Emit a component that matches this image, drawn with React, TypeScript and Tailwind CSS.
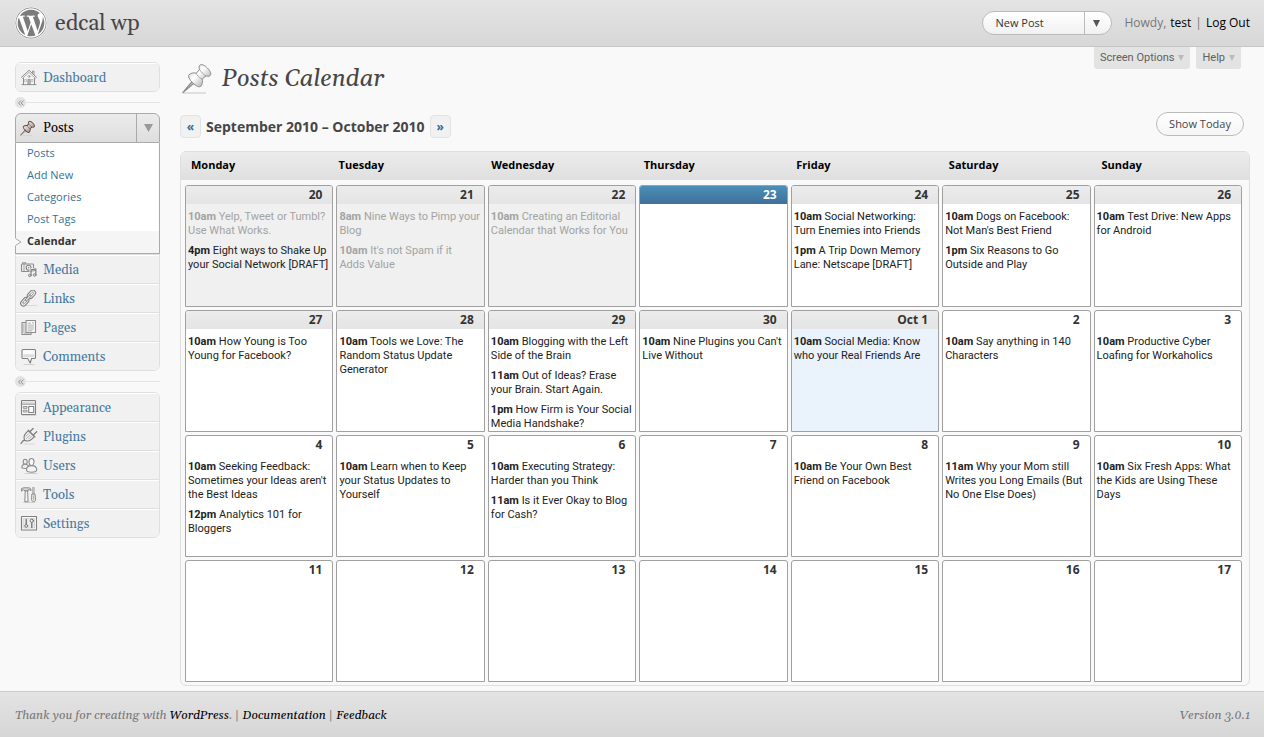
import React from "react";
import { FaWordpress } from "react-icons/fa";

type Post = { time: string; title: string; faded?: boolean };
type Tone = "past" | "today" | "near" | "first" | "plain";
type Day = { label: string; tone: Tone; posts?: Post[] };

const p = (time: string, title: string, faded = false): Post => ({ time, title, faded });

const weekdays = ["Monday", "Tuesday", "Wednesday", "Thursday", "Friday", "Saturday", "Sunday"];

const weeks: Day[][] = [
  [
    { label: "20", tone: "past", posts: [p("10am", "Yelp, Tweet or Tumbl? Use What Works.", true), p("4pm", "Eight ways to Shake Up your Social Network [DRAFT]")] },
    { label: "21", tone: "past", posts: [p("8am", "Nine Ways to Pimp your Blog", true), p("10am", "It's not Spam if it Adds\u00a0Value", true)] },
    { label: "22", tone: "past", posts: [p("10am", "Creating an Editorial Calendar that Works for You", true)] },
    { label: "23", tone: "today" },
    { label: "24", tone: "near", posts: [p("10am", "Social Networking: Turn Enemies into Friends"), p("1pm", "A Trip Down Memory Lane: Netscape [DRAFT]")] },
    { label: "25", tone: "near", posts: [p("10am", "Dogs on Facebook: Not Man's Best Friend"), p("1pm", "Six Reasons to Go Outside and Play")] },
    { label: "26", tone: "near", posts: [p("10am", "Test Drive: New Apps for Android")] },
  ],
  [
    { label: "27", tone: "near", posts: [p("10am", "How Young is Too Young for Facebook?")] },
    { label: "28", tone: "near", posts: [p("10am", "Tools we Love: The Random Status Update Generator")] },
    { label: "29", tone: "near", posts: [p("10am", "Blogging with the Left Side of the Brain"), p("11am", "Out of Ideas? Erase your\u00a0Brain. Start Again."), p("1pm", "How Firm is Your Social Media Handshake?")] },
    { label: "30", tone: "near", posts: [p("10am", "Nine Plugins you Can't Live Without")] },
    { label: "Oct 1", tone: "first", posts: [p("10am", "Social Media: Know who\u00a0your Real Friends Are")] },
    { label: "2", tone: "plain", posts: [p("10am", "Say anything in 140 Characters")] },
    { label: "3", tone: "plain", posts: [p("10am", "Productive Cyber Loafing for Workaholics")] },
  ],
  [
    { label: "4", tone: "plain", posts: [p("10am", "Seeking Feedback: Sometimes your Ideas aren't the Best Ideas"), p("12pm", "Analytics 101 for Bloggers")] },
    { label: "5", tone: "plain", posts: [p("10am", "Learn when to Keep your Status Updates to Yourself")] },
    { label: "6", tone: "plain", posts: [p("10am", "Executing Strategy: Harder than you Think"), p("11am", "Is it Ever Okay to Blog for Cash?")] },
    { label: "7", tone: "plain" },
    { label: "8", tone: "plain", posts: [p("10am", "Be Your Own Best Friend on Facebook")] },
    { label: "9", tone: "plain", posts: [p("11am", "Why your Mom still Writes you Long Emails (But No One Else Does)")] },
    { label: "10", tone: "plain", posts: [p("10am", "Six Fresh Apps: What the Kids are Using These Days")] },
  ],
  ["11", "12", "13", "14", "15", "16", "17"].map((label): Day => ({ label, tone: "plain" })),
];

const cellTone: Record<Tone, string> = {
  past: "bg-[#f0f0f0]",
  today: "bg-white",
  near: "bg-white",
  first: "bg-[#eaf2fb]",
  plain: "bg-white",
};

const labelTone: Record<Tone, string> = {
  past: "bg-linear-to-b from-[#ececec] to-[#e4e4e4] text-[#333]",
  today: "bg-linear-to-b from-[#4b8fb9] to-[#3f7099] text-white",
  near: "bg-linear-to-b from-[#ececec] to-[#e4e4e4] text-[#333]",
  first: "bg-linear-to-b from-[#ececec] to-[#e4e4e4] text-[#333]",
  plain: "text-[#333]",
};

function Icon({ children }: { children: React.ReactNode }) {
  return (
    <svg viewBox="0 0 18 18" className="size-[18px] shrink-0" fill="none" stroke="#8c8c8c" strokeWidth="1.1" strokeLinejoin="round" strokeLinecap="round" aria-hidden="true">
      {children}
    </svg>
  );
}

const icons = {
  house: (
    <Icon>
      <path d="M3.4 8.600 9 3.200l5.600 5.400V15.500H3.400z" fill="#f4f4f4" stroke="none" />
      <path d="M3.500 9v6.500M14.500 9v6.500" strokeWidth="1" />
      <path d="M1.500 8.300 9 1.300l7.500 7" strokeWidth="1" />
      <path d="M2.600 9.300 9 3.400l6.400 5.900" stroke="#a8a8a8" strokeWidth="0.9" />
      <path d="M12.500 4V2h1.500v3.400" fill="#ddd" strokeWidth="0.8" />
      <path d="M5 10.500h1.500v2H5zM11.500 10.500H13v2h-1.500z" fill="#fff" stroke="#aaa" strokeWidth="0.7" />
      <path d="M7.900 15.400v-5h2.300v5" fill="#b9b9b9" strokeWidth="0.8" />
      <circle cx="9" cy="7.400" r="1" fill="#fff" strokeWidth="0.7" />
      <path d="M2 15.600h14" stroke="#888" strokeWidth="0.9" />
    </Icon>
  ),
  media: (
    <Icon>
      <path d="M2.600 3V1.700h3V3" strokeWidth="0.9" />
      <rect x="1.500" y="3" width="12" height="7.500" rx="0.800" fill="#f1f1f1" />
      <path d="M4 3.200v7.200" strokeWidth="0.8" />
      <circle cx="8.600" cy="6.700" r="2.400" fill="#fff" stroke="#808080" />
      <circle cx="8.600" cy="6.700" r="0.900" fill="#999" stroke="none" />
      <path d="M11 14V8.900l4.800-1v5.800" fill="#f1f1f1" stroke="#f1f1f1" strokeWidth="3" />
      <path d="M11 14V8.900l4.800-1v5.800" stroke="#808080" strokeWidth="1.200" />
      <path d="M11 10.300l4.800-1" stroke="#808080" strokeWidth="0.8" />
      <ellipse cx="9.800" cy="14.400" rx="1.400" ry="1.200" fill="#ddd" stroke="#808080" strokeWidth="0.9" />
      <ellipse cx="14.600" cy="14" rx="1.400" ry="1.200" fill="#ddd" stroke="#808080" strokeWidth="0.9" />
    </Icon>
  ),
  links: (
    <Icon>
      <path d="M3 15.500h13.500" stroke="#d8d8d8" />
      <g transform="rotate(-48 8 8.200)">
        <rect x="-1.600" y="5.400" width="9.600" height="5.600" rx="2.800" fill="#ebebeb" stroke="#7c7c7c" strokeWidth="1" />
        <rect x="0.700" y="7.300" width="5" height="1.800" rx="0.900" fill="#fff" stroke="#7c7c7c" strokeWidth="0.700" />
        <rect x="8.400" y="5.400" width="9.600" height="5.600" rx="2.800" fill="#ebebeb" stroke="#7c7c7c" strokeWidth="1" />
        <rect x="10.700" y="7.300" width="5" height="1.800" rx="0.900" fill="#fff" stroke="#7c7c7c" strokeWidth="0.700" />
        <rect x="4.600" y="7.200" width="7.200" height="2" rx="1" fill="#e2e2e2" stroke="#7c7c7c" strokeWidth="0.800" />
      </g>
    </Icon>
  ),
  pages: (
    <Icon>
      <path d="M6 3.500H2v12h9v-2" fill="#e4e4e4" />
      <path d="M3.800 5.500v7.500M4.500 14.200h4" stroke="#b0b0b0" strokeWidth="0.8" />
      <rect x="6" y="1.500" width="9.500" height="12" fill="#fafafa" />
      <path d="M8 4.200h2.600M8 6.200h5.500M8 8.100h5.500M8 10h5.500M8 11.800h4" stroke="#a8a8a8" strokeWidth="0.9" />
      <path d="M12 3h2v1.500h-2z" fill="#c4c4c4" stroke="none" />
    </Icon>
  ),
  comments: (
    <Icon>
      <path d="M4 16.500h10" stroke="#d0d0d0" />
      <path d="M3 1.500h11.500a1 1 0 0 1 1 1V9.500a1 1 0 0 1-1 1h-3L10.300 15 7.600 10.500H3a1 1 0 0 1-1-1V2.500a1 1 0 0 1 1-1z" fill="#fafafa" stroke="#808080" />
      <path d="M3.300 6.200h11v3h-11z" fill="#dcdcdc" stroke="none" />
    </Icon>
  ),
  appearance: (
    <Icon>
      <path d="M2 16.300h14" stroke="#d0d0d0" />
      <rect x="1.500" y="1.500" width="14" height="14" rx="0.800" fill="#fafafa" stroke="#808080" />
      <path d="M2 2.500h13v2.400H2z" fill="#dadada" stroke="none" />
      <path d="M2 5.300h13" stroke="#909090" strokeWidth="0.9" />
      <path d="M3.700 7.500h3.300v1.800H3.700zM3.700 11.200h3.300V13H3.700z" fill="#e8e8e8" strokeWidth="0.9" />
      <path d="M8.700 7.500h5v6h-5z" fill="#fff" stroke="#808080" />
    </Icon>
  ),
  plugins: (
    <Icon>
      <path d="M4 16h10.500" stroke="#d8d8d8" />
      <path d="M4.800 12.200c-2.600-.4-2.800 3-3.800 3.200" stroke="#888" strokeWidth="1.500" />
      <g transform="rotate(45 9 8)">
        <path d="M4.800 4.600h8.400v3.600c0 2.800-2 5-4.200 6-2.200-1-4.200-3.200-4.200-6z" fill="#efefef" stroke="#7c7c7c" />
        <path d="M4.200 4.400h9.600" stroke="#7c7c7c" strokeWidth="1.200" />
        <path d="M6.600 4V-.4M11.400 4V-.4" stroke="#7c7c7c" strokeWidth="1.300" />
        <path d="M7 6.800v3.400M9 6.800v4.800M11 6.800v3.400" stroke="#aaa" strokeWidth="0.8" />
      </g>
    </Icon>
  ),
  users: (
    <Icon>
      <path d="M5 16.500h12" stroke="#d0d0d0" />
      <ellipse cx="5.200" cy="4.800" rx="2" ry="2.500" fill="#ededed" />
      <path d="M1.800 10.300c0-2 1.300-3.100 3.400-3.100s3.400 1.100 3.400 3.100c0 1.500-6.800 1.500-6.800 0z" fill="#ededed" />
      <path d="M9 4.600c0-1.900 1-3.100 2.500-3.100S14 2.700 14 4.600s-1 4-2.500 4S9 6.500 9 4.600z" fill="#fafafa" />
      <path d="M6.500 12.800c0-2.400 1.900-4.200 5.100-4.200s5.100 1.800 5.100 4.200c0 3.300-10.200 3.300-10.200 0z" fill="#f4f4f4" />
    </Icon>
  ),
  tools: (
    <Icon>
      <path d="M3.600 16.400h11" stroke="#d0d0d0" />
      <path d="M1.500 4.800V2.600l2-.8h5c1.800 0 2.600.8 2.600 2.800-1-.8-2-1-3-1v1.200H5.200L3.600 3.900z" fill="#dadada" stroke="#808080" strokeWidth="0.9" />
      <path d="M5.600 5h2l.5 10.700H5.200z" fill="#f4f4f4" stroke="#808080" strokeWidth="0.9" />
      <path d="M13 1.500h1.200V7.500H13z" fill="#ccc" stroke="#999" strokeWidth="0.7" />
      <path d="M12.200 8h2.800l.6 6.200c0 1.700-4 1.700-4 0z" fill="#efefef" stroke="#808080" strokeWidth="0.9" />
      <path d="M13.600 9.800v3.800" stroke="#999" strokeWidth="0.8" />
    </Icon>
  ),
  settings: (
    <Icon>
      <rect x="1.500" y="1.500" width="15" height="13.500" fill="#fcfcfc" stroke="#808080" />
      <path d="M3.500 3.500h11v9.500h-11z" fill="#ececec" stroke="#ccc" strokeWidth="0.8" />
      <path d="M6.200 4.400V9.500M11.800 12.400V7.500" stroke="#707070" strokeWidth="1.300" />
      <circle cx="6.200" cy="10.900" r="1.400" fill="#fff" stroke="#707070" strokeWidth="1" />
      <circle cx="11.800" cy="5.700" r="1.600" fill="#fff" stroke="#707070" strokeWidth="1" />
    </Icon>
  ),
};

function Pin({ className, dark }: { className: string; dark?: boolean }) {
  const id = dark ? "pin-menu" : "pin-title";
  const line = dark ? "#5d4c4b" : "#858585";
  return (
    <svg viewBox="0 0 32 32" className={className} stroke={line} strokeWidth={dark ? 1.9 : 0.9} strokeLinejoin="round" aria-hidden="true">
      <defs>
        <linearGradient id={id} x1="0" x2="1" y1="0" y2="0">
          <stop offset="0" stopColor={dark ? "#f3e6e3" : "#e4e4e4"} />
          <stop offset="0.350" stopColor={dark ? "#dccfcc" : "#ffffff"} />
          <stop offset="1" stopColor={dark ? "#a89694" : "#bdbdbd"} />
        </linearGradient>
      </defs>
      <path d="M1 31h23" stroke="#cdcdcd" strokeWidth="1.200" />
      <g transform="translate(0.800 30.600) rotate(45)">
        <path d="M-1.300-14.500h2.600L0 0z" fill="#bbb" strokeWidth="1" />
        <path d="M-8.200-17c.2-3.400 2.200-5 4-6.300l-.4-5c-1.800-.7-2.700-1.700-2.700-3.100 0-2 3.200-3.400 7.300-3.400s7.300 1.400 7.300 3.400c0 1.400-.9 2.400-2.700 3.100l-.4 5c1.800 1.300 3.800 2.900 4 6.300 0 1.800-3.600 3.100-8.200 3.100s-8.200-1.300-8.200-3.100z" fill={`url(#${id})`} />
        <path d="M-4.200-23.300c2 1.200 6.400 1.200 8.400 0M-4.600-28.300c2 .9 7.200.9 9.200 0" fill="none" strokeWidth={dark ? 1 : 0.600} />
      </g>
    </svg>
  );
}

function Triangle({ className }: { className: string }) {
  return (
    <svg viewBox="0 0 10 10" className={className} fill="currentColor" preserveAspectRatio="none" aria-hidden="true">
      <path d="M0 0h10L5 10z" />
    </svg>
  );
}

function MenuItem({ icon, label }: { icon: React.ReactNode; label: string }) {
  return (
    <li className="border-b border-[#dfdfdf] bg-[#f1f1f1] last:border-b-0">
      <a href="#" className="flex h-7 items-center gap-[5px] border-t border-white pl-1 text-[#4478a0]">
        {icon}
        <span className="pt-[2px]">{label}</span>
      </a>
    </li>
  );
}

function Separator() {
  return (
    <div className="flex h-[21px] items-center">
      <span className="flex size-[11px] items-center justify-center rounded-full bg-[#e3e3e3]">
        <svg viewBox="0 0 6 6" className="size-[6px]" fill="none" stroke="#888" strokeWidth="0.9" aria-hidden="true">
          <path d="M2.800.6.600 3l2.200 2.400M5.400.6 3.200 3l2.200 2.400" />
        </svg>
      </span>
      <span className="h-px flex-1 bg-[#e3e3e3]" />
    </div>
  );
}

function Sidebar() {
  return (
    <nav aria-label="Admin" className="w-[145px] shrink-0 pt-[15px] font-['Gelasio','Liberation_Serif',serif] text-[13px]">
      <ul className="overflow-hidden rounded-md border border-[#dfdfdf]">
        <MenuItem icon={icons.house} label="Dashboard" />
      </ul>
      <Separator />
      <div className="flex h-[30px] overflow-hidden rounded-t-md border border-[#aaa] bg-linear-to-b from-[#ececec] to-[#dedede]">
        <a href="#" className="flex flex-1 items-center gap-[7px] pl-1 text-black">
          <Pin className="size-4" dark />
          <span className="pt-[2px]">Posts</span>
        </a>
        <button type="button" aria-label="Toggle Posts menu" className="flex w-[23px] items-center justify-center border-l border-[#aaa] text-[#999]">
          <Triangle className="h-2 w-[9px]" />
        </button>
      </div>
      <ul className="border-x border-b border-[#aaa] bg-white font-['Open_Sans',sans-serif] text-[11px]">
        {["Posts", "Add New", "Categories", "Post Tags"].map((label) => (
          <li key={label}>
            <a href="#" className="flex h-[22px] items-center pb-px pl-[11px] text-[#34719b]">{label}</a>
          </li>
        ))}
        <li className="relative bg-[#f5f5f5]">
          <a href="#" aria-current="page" className="flex h-[22px] items-center pb-px pl-[11px] font-bold text-[#333]">Calendar</a>
          <svg viewBox="0 0 7 8" className="absolute top-[7px] -left-px h-2 w-[7px]" aria-hidden="true">
            <path d="M0 0h1l5 4-5 4H0z" fill="#f9f9f9" />
            <path d="M.5.500 6 4 .5 7.500" fill="none" stroke="#aaa" />
          </svg>
        </li>
      </ul>
      <ul className="overflow-hidden rounded-b-md border border-[#dfdfdf]">
        <MenuItem icon={icons.media} label="Media" />
        <MenuItem icon={icons.links} label="Links" />
        <MenuItem icon={icons.pages} label="Pages" />
        <MenuItem icon={icons.comments} label="Comments" />
      </ul>
      <Separator />
      <ul className="overflow-hidden rounded-md border border-[#dfdfdf]">
        <MenuItem icon={icons.appearance} label="Appearance" />
        <MenuItem icon={icons.plugins} label="Plugins" />
        <MenuItem icon={icons.users} label="Users" />
        <MenuItem icon={icons.tools} label="Tools" />
        <MenuItem icon={icons.settings} label="Settings" />
      </ul>
    </nav>
  );
}

function Calendar() {
  return (
    <table className="mt-[13px] block rounded-md border border-[#dfdfdf] text-[11px]">
      <thead className="block rounded-t-md bg-linear-to-b from-[#ececec] to-[#dfdfdf]">
        <tr className="grid h-7 grid-cols-7 items-center">
          {weekdays.map((day) => (
            <th key={day} scope="col" className="pb-px pl-[5px] text-left font-bold text-black first:pl-[10px]">{day}</th>
          ))}
        </tr>
      </thead>
      <tbody className="flex flex-col gap-[3px] pt-[5px] pr-[7px] pb-[3px] pl-1">
        {weeks.map((week) => (
          <tr key={week[0].label} className="grid grid-cols-7 gap-[3px]">
            {week.map((day) => (
              <td key={day.label} className={`h-[122px] overflow-hidden rounded-t-[3px] border border-[#a0a0a0] ${cellTone[day.tone]}`}>
                <div className={`h-[18px] pr-[10px] text-right text-[12px] leading-[18px] font-bold ${labelTone[day.tone]}`}>{day.label}</div>
                <ul className="flex flex-col gap-[6px] pt-[6px] pl-[2px] font-['Roboto',sans-serif] leading-[14px]">
                  {day.posts?.map((post) => (
                    <li key={post.title} className={post.faded ? "text-[#a3a3a3]" : "text-[#222]"}>
                      <strong className="font-bold">{post.time}</strong> {post.title}
                    </li>
                  ))}
                </ul>
              </td>
            ))}
          </tr>
        ))}
      </tbody>
    </table>
  );
}

export default function App() {
  return (
    <div className="flex min-h-screen flex-col bg-[#f9f9f9] font-['Open_Sans',sans-serif] text-[#333]">
      <header className="flex h-[47px] items-center justify-between border-b border-[#c6c6c6] bg-linear-to-b from-[#e4e4e4] to-[#d8d7d8] pr-[14px] pl-[15px]">
        <a href="#" className="flex items-center gap-2 text-[#464646]">
          <FaWordpress className="size-8 rounded-full bg-white text-[#7b7b7b]" aria-hidden="true" />
          <span className="pt-[2px] font-['Gelasio','Liberation_Serif',serif] text-[22px] leading-8">edcal wp</span>
        </a>
        <div className="flex items-center gap-3 text-[12px]">
          <div className="flex h-6 w-[130px] overflow-hidden rounded-full border border-[#bbb] bg-linear-to-b from-white to-[#f1f1f1] text-[11px]">
            <button type="button" className="flex-1 pl-3 text-left">New Post</button>
            <button type="button" aria-label="More actions" className="flex w-[27px] items-center border-l border-[#bbb] pl-2 text-[#555]">
              <Triangle className="size-[7px]" />
            </button>
          </div>
          <p className="flex gap-1 text-[#777]">
            <span>Howdy,</span> <a href="#" className="text-black">test</a> <span>|</span> <a href="#" className="text-black">Log Out</a>
          </p>
        </div>
      </header>

      <div className="flex flex-1 gap-5 pr-[14px] pl-[15px]">
        <Sidebar />
        <main className="min-w-0 flex-1 pb-1">
          <div className="flex items-start justify-between">
            <h1 className="flex items-center gap-2 pt-[15px] font-['Gelasio','Liberation_Serif',serif] text-[24px] leading-8 text-[#464646] italic">
              <Pin className="ml-[2px] size-8" />
              <span className="pt-[2px] leading-[30px]">Posts Calendar</span>
            </h1>
            <div className="flex gap-[6px] pr-[9px] font-['Roboto',sans-serif] text-[11px] text-[#606060]">
              {["Screen Options", "Help"].map((label) => (
                <button key={label} type="button" className="flex h-[22px] items-center gap-1 rounded-b-[3px] bg-[#e3e3e3] px-[6px]">
                  {label}
                  <Triangle className="size-[6px] text-[#bbb]" />
                </button>
              ))}
            </div>
          </div>
          <div className="mt-[18px] flex items-start justify-between pr-[6px]">
            <div className="flex items-center gap-[5px] pt-[3px]">
              <button type="button" aria-label="Previous weeks" className="h-[23px] w-[21px] rounded-[4px] border border-[#e3e3e3] bg-[#f1f1f1] text-[12px] leading-5 font-bold text-[#2f6d98]">«</button>
              <h2 className="text-[14px] leading-5 font-bold text-[#464646]">September 2010 – October 2010</h2>
              <button type="button" aria-label="Next weeks" className="h-[23px] w-[21px] rounded-[4px] border border-[#e3e3e3] bg-[#f1f1f1] text-[12px] leading-5 font-bold text-[#2f6d98]">»</button>
            </div>
            <button type="button" className="h-6 w-[88px] rounded-full border border-[#bbb] bg-linear-to-b from-white to-[#f5f5f5] text-[11px] text-[#464646]">Show Today</button>
          </div>
          <Calendar />
        </main>
      </div>

      <footer className="flex h-[46px] items-center justify-between border-t border-[#ccc] bg-linear-to-b from-[#e3e3e3] to-[#d7d6d7] pt-[2px] pr-[14px] pl-[15px] font-['Gelasio','Liberation_Serif',serif] text-[12px] text-[#777] italic">
        <p>
          Thank you for creating with <a href="#" className="text-black">WordPress</a>. | <a href="#" className="text-black">Documentation</a> | <a href="#" className="text-black">Feedback</a>
        </p>
        <p>Version 3.0.1</p>
      </footer>
    </div>
  );
}
